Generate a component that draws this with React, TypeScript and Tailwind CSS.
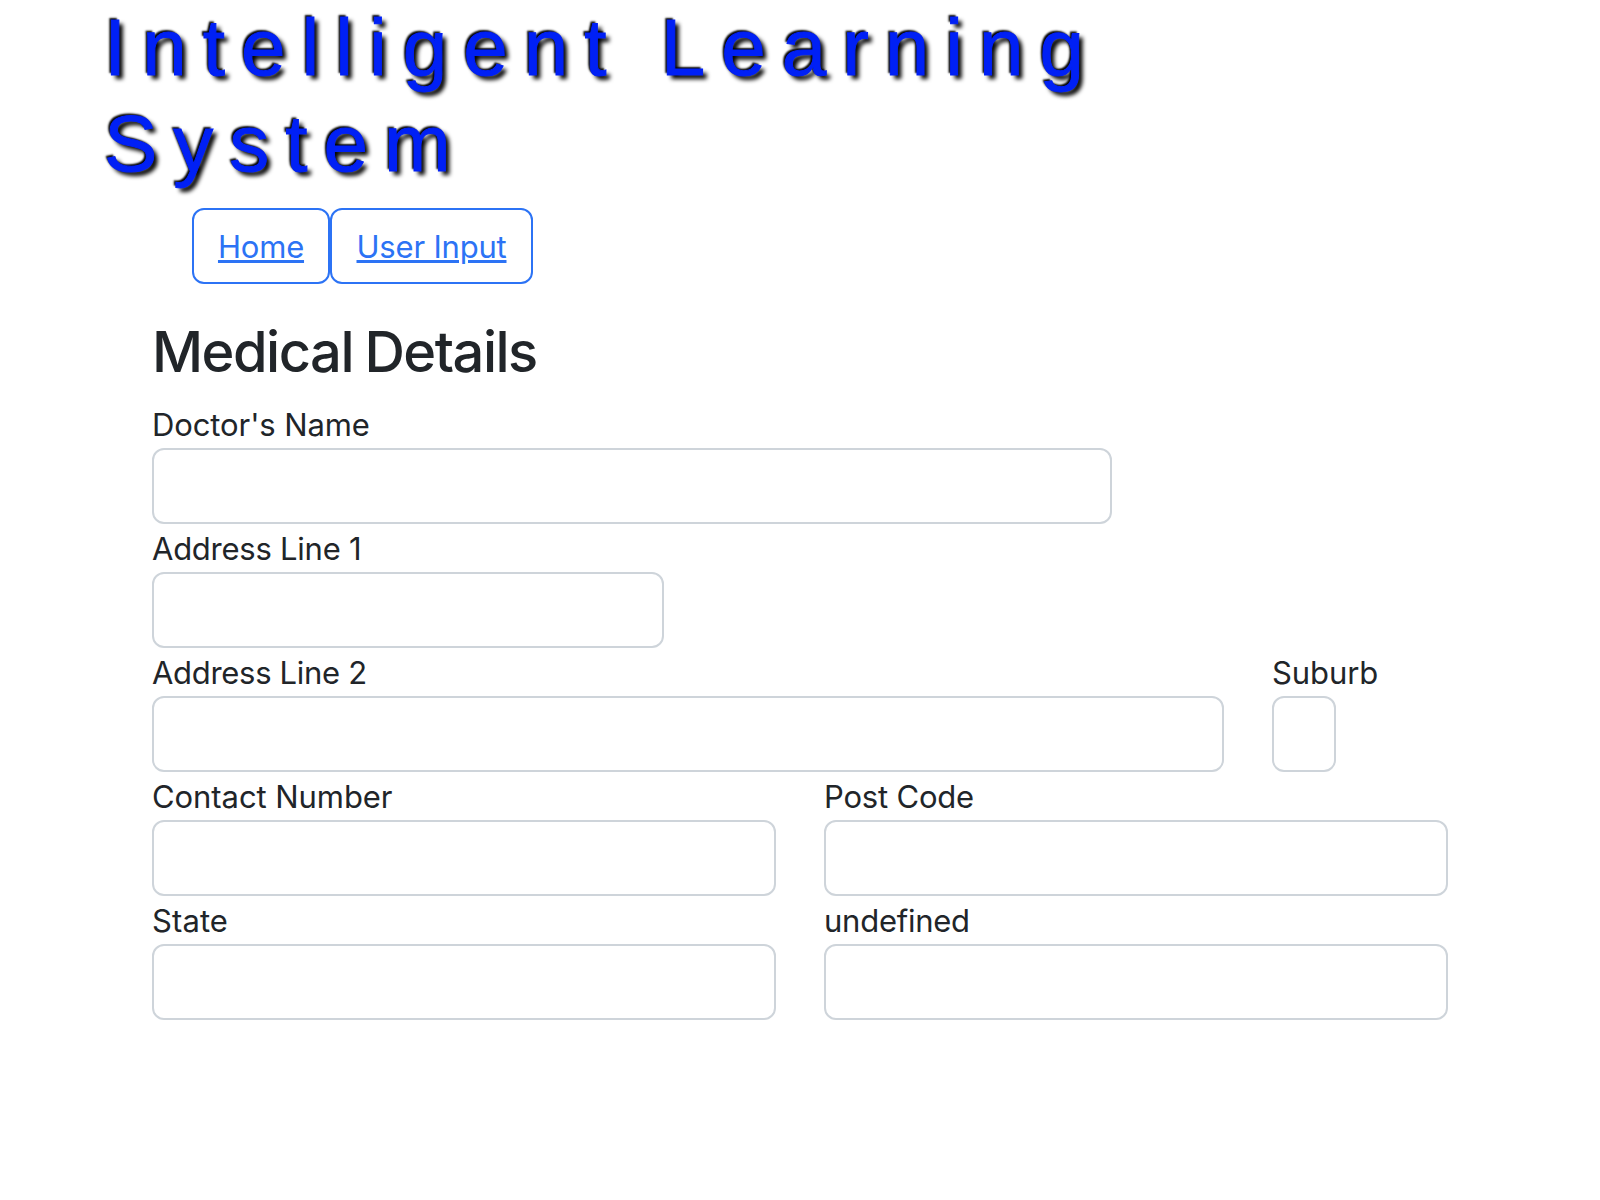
import React from "react";

const labelClass =
  "block h-12 pt-px text-[31px] leading-[48px] whitespace-nowrap text-[#212529]";
const inputClass =
  "block h-[76px] rounded-[12px] border-2 border-[#ced4da] bg-white px-6 text-[32px] outline-none";
const linkClass =
  "flex h-[76px] items-center justify-center rounded-[12px] border-2 border-[#2c73f5] pt-[2px] text-[31px] tracking-[-0.2px] text-[#2c73f5] underline decoration-[3px] underline-offset-[2px]";

type FieldProps = { label: string; width: string; col: string; tracking?: string };

function Field({ label, width, col, tracking = "tracking-[-0.1px]" }: FieldProps) {
  return (
    <div className={col}>
      <label className={`${labelClass} ${tracking}`}>{label}</label>
      <input type="text" aria-label={label} className={`${inputClass} ${width}`} />
    </div>
  );
}

export default function App() {
  return (
    <div className="h-[1200px] w-[1600px] overflow-hidden bg-white font-['Inter',sans-serif]">
      <header className="pl-[104px]">
        <h1 className="w-[1040px] font-['Liberation_Sans',sans-serif] text-[80px] leading-[96px] font-normal tracking-[16px] text-[#0020f5] [-webkit-text-stroke:1px_#0020f5] [text-shadow:-2px_-2px_2px_#000,4px_4px_4px_#000]">
          Intelligent Learning System
        </h1>
        <nav className="mt-4 flex pl-[88px]">
          <a className={`${linkClass} w-[138px]`} href="#home">
            Home
          </a>
          <a className={`${linkClass} w-[203px]`} href="#input">
            User Input
          </a>
        </nav>
      </header>
      <main className="pt-[35px] pl-[152px]">
        <h2 className="mb-[14px] text-[56px] leading-[67px] font-medium tracking-[-1.5px] [word-spacing:-2px] text-[#212529]">
          Medical Details
        </h2>
        <form>
          <Field label="Doctor's Name" col="w-[1008px]" width="w-[960px]" />
          <Field label="Address Line 1" col="w-[560px]" width="w-[512px]" tracking="tracking-[-0.25px]" />
          <div className="flex">
            <Field label="Address Line 2" col="w-[1120px]" width="w-[1072px]" tracking="tracking-[-0.3px]" />
            <Field label="Suburb" col="w-[112px]" width="w-[64px]" />
          </div>
          <div className="flex">
            <Field label="Contact Number" col="w-[672px]" width="w-[624px]" tracking="tracking-[-0.07px]" />
            <Field label="Post Code" col="w-[672px]" width="w-[624px]" tracking="tracking-[-0.2px]" />
          </div>
          <div className="flex">
            <Field label="State" col="w-[672px]" width="w-[624px]" tracking="tracking-[0.1px]" />
            <Field label="undefined" col="w-[672px]" width="w-[624px]" tracking="tracking-[-0.25px]" />
          </div>
        </form>
      </main>
    </div>
  );
}
